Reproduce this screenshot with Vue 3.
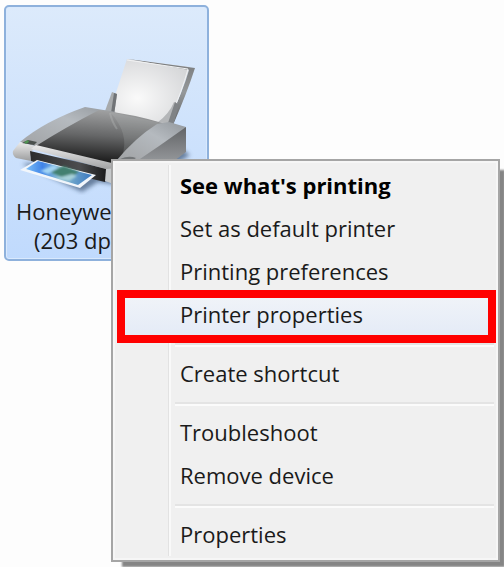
<template>
  <main class="desktop">
    <button class="device" type="button" aria-label="Honeywell printer">
      <svg class="printer" viewBox="10 50 190 145" aria-hidden="true">
        <defs>
          <radialGradient id="paper" cx="0.35" cy="0.6" r="0.7">
            <stop offset="0" stop-color="#fafafa" />
            <stop offset="1" stop-color="#d6d7d9" />
          </radialGradient>
          <linearGradient id="edge" x1="0" y1="0" x2="0" y2="1">
            <stop offset="0" stop-color="#77797b" />
            <stop offset="0.5" stop-color="#95989a" />
            <stop offset="1" stop-color="#626466" />
          </linearGradient>
          <linearGradient id="cover" x1="0.5" y1="0" x2="0.35" y2="1">
            <stop offset="0" stop-color="#a0a1a2" />
            <stop offset="0.45" stop-color="#666768" />
            <stop offset="0.9" stop-color="#1c1c1c" />
          </linearGradient>
          <linearGradient id="panel" x1="0" y1="1" x2="1" y2="0">
            <stop offset="0" stop-color="#a0a2a4" />
            <stop offset="0.6" stop-color="#b5babf" />
            <stop offset="1" stop-color="#92979c" />
          </linearGradient>
          <linearGradient id="side" x1="0" y1="0" x2="0" y2="1">
            <stop offset="0" stop-color="#626466" />
            <stop offset="1" stop-color="#a2a5a8" />
          </linearGradient>
          <linearGradient id="front" x1="0" y1="0" x2="0" y2="1">
            <stop offset="0" stop-color="#ececec" />
            <stop offset="1" stop-color="#9c9d9e" />
          </linearGradient>
          <linearGradient id="slot" x1="0" y1="0" x2="1" y2="0">
            <stop offset="0" stop-color="#2b2c2d" />
            <stop offset="0.6" stop-color="#4c4d4f" />
            <stop offset="1" stop-color="#101011" />
          </linearGradient>
          <linearGradient id="photo" x1="0" y1="0" x2="1" y2="0">
            <stop offset="0" stop-color="#7cc0f8" />
            <stop offset="0.25" stop-color="#3f83e8" />
            <stop offset="0.5" stop-color="#8cbfd0" />
            <stop offset="1" stop-color="#3b78c0" />
          </linearGradient>
          <filter id="shade" x="-20%" y="-20%" width="140%" height="140%">
            <feGaussianBlur stdDeviation="2" />
          </filter>
          <filter id="blend" x="-20%" y="-20%" width="140%" height="140%">
            <feGaussianBlur stdDeviation="1" />
          </filter>
        </defs>
        <path d="M22 164 L82 192 L98 182 L140 188 L190 155 L180 148 Z" fill="#3f5878" opacity="0.7" filter="url(#shade)" />
        <path d="M127 59 L190 67 Q182 91 168 124 L109 114 Z" fill="url(#paper)" />
        <path d="M128 59 L195 68 Q187 93 173 125 L168 123 Q183 91 189 70 Z" fill="url(#edge)" />
        <path d="M127 60 L188 69 Q182 91 169 121" fill="none" stroke="#f1f2f3" />
        <path d="M105 111 L112 92 L117 94 L114 115 Z" fill="#a7aaac" />
        <path d="M114 93 L117 94 L114 115 L111 113 Z" fill="#707376" />
        <path d="M158 122 Q169 114 174 102 L178 104 L173 125 Z" fill="#b4b6b8" />
        <path d="M175 102 L179 105 L173 125 L168 123 Z" fill="#808386" />
        <path d="M186 127 L186 152 L174 161 L125 171 L126 158 Q148 145 168 130 Z" fill="url(#side)" />
        <path d="M85 107 L116 112 L42 148 L20 142 Q45 121 85 107 Z" fill="url(#panel)" />
        <path d="M99 110 Q133 114 166 124 Q147 138 118 159 L112 166 L36 146 Q66 127 99 110 Z" fill="url(#cover)" />
        <path d="M110 112 L166 124 Q145 139 122 156 Q130 134 110 112 Z" fill="#c4c5c6" opacity="0.18" />
        <path d="M110 113 Q112 122 117 129" fill="none" stroke="#c1c2c3" stroke-width="2" opacity="0.3" />
        <path d="M157 124 L169 122 L186 127 Q161 145 137 161 L117 160 Q135 138 157 124 Z" fill="url(#panel)" />
        <path d="M120 159 Q129 155 136 158 L129 163 Z" fill="#737678" />
        <path d="M20 142 L38 147 Q29 149 31 161 L16 158 Q12 155 13 151 Z" fill="url(#front)" />
        <path d="M22 143 L28 140 L37 142 L34 145 Z" fill="#4a504d" />
        <path d="M24 142 L28 140 L29 142 L26 144 Z" fill="#4e9251" />
        <path d="M30 151 L112 170 L105 182 L88 178 L31 161 Z" fill="url(#slot)" />
        <path d="M31 149 L36 145 L116 164 L113 171 Z" fill="url(#front)" />
        <path d="M106 169 L117 168 L119 186 L105 181 Z" fill="#c7cacc" />
        <path d="M37 160 L96 175 L80 188 L20 170 Z" fill="#f2f6fb" />
        <path d="M38 161 L92 175 L78 185 L26 169 Z" fill="url(#photo)" />
        <g filter="url(#blend)">
          <path d="M50 172 L64 166 L79 172 L67 179 Z" fill="#42806f" />
          <path d="M40 171 L54 165 L58 168 L48 174 Z" fill="#a3d4f4" />
          <path d="M57 178 L72 174 L77 176 L69 181 Z" fill="#a6d0d8" />
        </g>
      </svg>
      <span class="device-name">Honeywe</span>
      <span class="device-detail">(203 dp</span>
    </button>

    <div class="menu" role="menu">
      <div v-for="(group, index) in groups" :key="index" class="group" role="group">
        <button
            v-for="item in group"
            :key="item"
            class="item"
            :class="{ default: item === defaultItem, marked: item === markedItem }"
            type="button"
            role="menuitem"
        >
          {{ item }}
        </button>
      </div>
    </div>
  </main>
</template>

<script setup>
import {ref} from 'vue';

const defaultItem = "See what's printing";
const markedItem = ref('Printer properties');

const groups = [
  [defaultItem, 'Set as default printer', 'Printing preferences', 'Printer properties'],
  ['Create shortcut'],
  ['Troubleshoot', 'Remove device'],
  ['Properties'],
];
</script>

<style>
body {
  margin: 0;
  background: #fdfdfd;
}
</style>

<style scoped>
.desktop {
  position: relative;
  box-sizing: border-box;
  min-height: 100vh;
  padding: 5px 4px;
  overflow: hidden;
  font-family: "Open Sans", "Noto Sans", sans-serif;
  font-size: 22px;
  color: #1a1a1a;
}

.device {
  display: flex;
  flex-direction: column;
  align-items: flex-start;
  box-sizing: border-box;
  width: 205px;
  padding: 43px 4px 4px;
  border: 2px solid #8eb1dc;
  border-radius: 5px;
  background: linear-gradient(#dceafb, #c0dafd);
  box-shadow: inset 0 0 0 1px #d9e9fd;
  font: inherit;
  line-height: 29px;
  color: inherit;
}

.printer {
  width: 190px;
  height: 145px;
  margin-bottom: 2px;
}

.device-name {
  padding-left: 6px;
}

.device-detail {
  padding-left: 24px;
}

.menu {
  position: absolute;
  top: 159px;
  left: 111px;
  right: 4px;
  padding: 3px 4px 4px;
  border: 2px solid #a5a5a5;
  background: #f0f0f0;
  box-shadow: inset 0 0 0 2px #f6f6f6, 8px 8px 2px -3px #858585;
}

/* line between the icon gutter and the labels */
.menu::before {
  content: "";
  position: absolute;
  top: 4px;
  bottom: 4px;
  left: 55px;
  width: 1px;
  border-right: 2px solid #f9f9f9;
  background: #e2e2e2;
}

.group + .group::before {
  content: "";
  display: block;
  height: 2px;
  margin: 7px 0 5px 58px;
  border-bottom: 2px solid #fbfbfb;
  background: #e4e4e4;
}

.item {
  position: relative;
  display: block;
  width: 100%;
  height: 43px;
  padding: 0 0 0 63px;
  border: none;
  background: none;
  font: inherit;
  line-height: 43px;
  text-align: left;
  white-space: nowrap;
  color: inherit;
}

.default {
  font-weight: 700;
  color: #000000;
}

.marked {
  background: linear-gradient(#f1f4f8, #e4ebf7);
}

.marked::after {
  content: "";
  position: absolute;
  inset: -3px -2px -7px 0;
  border: 8px solid #ff0000;
}
</style>
